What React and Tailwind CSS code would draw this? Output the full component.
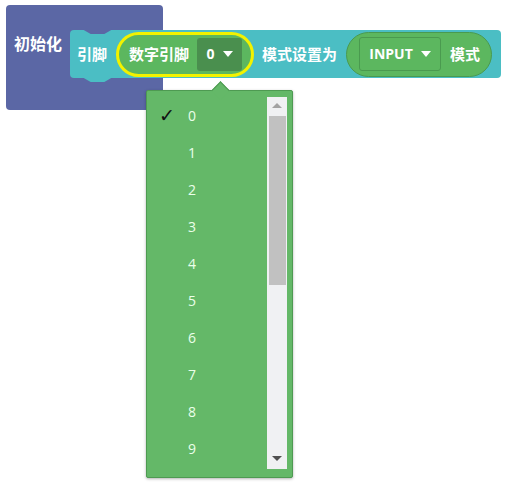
import React from "react";

const items = ["0", "1", "2", "3", "4", "5", "6", "7", "8", "9"];

export default function App() {
  return (
    <div
      className="relative w-[508px] h-[486px] bg-white overflow-hidden"
      style={{ fontFamily: '"Noto Sans", "Noto Sans CJK SC", sans-serif' }}
    >
      {/* purple setup block */}
      <div className="absolute left-[6px] top-[5px] w-[157px] h-[105px] rounded-[4px] bg-[#5b67a5]">
        <div className="pl-[8px] pt-[31px] text-[16px] font-bold text-white leading-none">
          初始化
        </div>
      </div>

      {/* teal block */}
      <div className="absolute left-[70px] top-[30px] w-[431px] h-[48px] rounded-[4px] bg-[#4bbec4] flex items-center">
        {/* top notch */}
        <div className="absolute left-[12px] -top-[1px] w-[31px] h-[5px] bg-[#5b67a5] [clip-path:polygon(0_0,100%_0,72%_100%,28%_100%)]" />
        {/* bottom tab */}
        <div className="absolute left-[12px] -bottom-[4px] w-[31px] h-[5px] bg-[#4bbec4] [clip-path:polygon(0_0,100%_0,72%_100%,28%_100%)]" />
        <span className="ml-[7px] text-[15px] font-bold text-white leading-none">引脚</span>
        {/* yellow pill */}
        <div className="ml-[9px] w-[138px] h-[45px] rounded-full border-[3px] border-[#f2f200] bg-[#5cb75f] flex items-center">
          <span className="ml-[10px] text-[15px] font-bold text-white leading-none">数字引脚</span>
          <div className="ml-[8px] w-[45px] h-[33px] rounded-[3px] bg-[#4a8f4e] flex items-center justify-center gap-[8px]">
            <span className="text-[14px] font-bold text-white leading-none" style={{ fontFamily: '"Open Sans", sans-serif' }}>0</span>
            <span className="w-0 h-0 border-l-[5px] border-r-[5px] border-t-[6px] border-l-transparent border-r-transparent border-t-white" />
          </div>
        </div>
        <span className="ml-[8px] text-[15px] font-bold text-white leading-none">模式设置为</span>
        {/* mode pill */}
        <div className="ml-[9px] w-[146px] h-[45px] rounded-full border border-[#4a9a4f] bg-[#5cb75f] flex items-center">
          <div className="ml-[12px] w-[82px] h-[34px] rounded-[3px] border border-[#4a9a4f] flex items-center justify-center gap-[8px]">
            <span className="text-[14px] font-bold text-white leading-none" style={{ fontFamily: '"Open Sans", sans-serif' }}>INPUT</span>
            <span className="w-0 h-0 border-l-[5px] border-r-[5px] border-t-[6px] border-l-transparent border-r-transparent border-t-white" />
          </div>
          <span className="ml-[9px] text-[15px] font-bold text-white leading-none">模式</span>
        </div>
      </div>

      {/* dropdown menu */}
      <div className="absolute left-[146px] top-[90px] w-[147px] h-[388px] rounded-[2px] border border-[#4e9a52] bg-[#64b868] shadow-[0_1px_3px_rgba(0,0,0,0.3)]">
        {/* arrow */}
        <div className="absolute left-[67px] -top-[7px] w-[13px] h-[13px] rotate-45 bg-[#64b868] border-l border-t border-[#4e9a52]" />
        <div className="relative pt-[6px]">
          {items.map((n, i) => (
            <div key={n} className="h-[37px] flex items-center">
              <span className="w-[41px] pl-[12px] text-[19px] font-bold text-[#111] leading-none" style={{ fontFamily: '"DejaVu Sans", sans-serif' }}>{i === 0 ? "✓" : ""}</span>
              <span className="text-[14px] text-[#eaffea] leading-none" style={{ fontFamily: '"Open Sans", sans-serif' }}>{n}</span>
            </div>
          ))}
        </div>
        {/* scrollbar */}
        <div className="absolute left-[120px] top-[6px] w-[20px] h-[372px] bg-[#f0f1f3] flex flex-col items-center">
          <div className="mt-[6px] w-0 h-0 border-l-[5px] border-r-[5px] border-b-[5px] border-l-transparent border-r-transparent border-b-[#a3a3a3]" />
          <div className="mt-[8px] w-[17px] h-[169px] bg-[#c1c1c1]" />
          <div className="mt-auto mb-[8px] w-0 h-0 border-l-[5px] border-r-[5px] border-t-[5px] border-l-transparent border-r-transparent border-t-[#505050]" />
        </div>
      </div>
    </div>
  );
}
